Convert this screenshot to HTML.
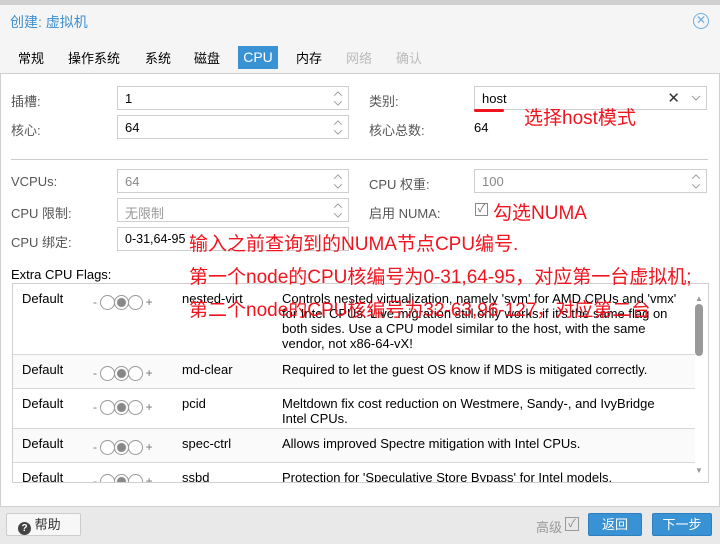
<!DOCTYPE html>
<html><head><meta charset="utf-8"><style>
*{box-sizing:border-box;margin:0;padding:0}
body{width:720px;height:544px;background:#f5f5f5;font-family:"Liberation Sans","Noto Sans CJK SC",sans-serif;font-size:13px;color:#000;position:relative;overflow:hidden}
.a{position:absolute;white-space:nowrap}
.lbl{color:#555}
.inp{position:absolute;height:24px;border:1px solid #cfcfcf;background:#fff;padding:4px 7px;font-size:13px}
.spin{position:absolute;right:5px;top:3px}
.red{color:#f0141e;font-size:19px}
.row{position:absolute;left:0;width:682px;border-bottom:1px solid #d8d8d8}
.row div{position:absolute;top:7px}
.tog{left:80px;color:#777;font-size:12px;top:11px!important}
.c{display:inline-block;width:15px;height:15px;border:1px solid #999;border-radius:50%;vertical-align:middle;margin:0 -0.5px;background:#fff}
.c.on{background:radial-gradient(circle,#888 4px,#fff 5px)}
.btn{position:absolute;height:23px;background:#3892d4;color:#fff;border:1px solid #2f7fc0;border-radius:2px;text-align:center;line-height:21px;font-size:13px}
</style></head><body>
<div class="a" style="left:0;top:0;width:720px;height:5px;background:#aaa;opacity:.5"></div>
<div class="a" style="left:10px;top:12px;color:#3d8fd0;font-size:14px">创建: 虚拟机</div>
<div class="a" style="left:693px;top:13px;width:16px;height:16px;border:1.5px solid #6aaee0;border-radius:50%;color:#6aaee0;font-size:12px;line-height:13px;text-align:center">✕</div>
<div class="a" style="left:18px;top:48px">常规</div>
<div class="a" style="left:68px;top:48px">操作系统</div>
<div class="a" style="left:145px;top:48px">系统</div>
<div class="a" style="left:194px;top:48px">磁盘</div>
<div class="a" style="left:238px;top:46px;width:40px;height:23px;background:#3892d4;color:#fff;text-align:center;line-height:22px;font-size:14px">CPU</div>
<div class="a" style="left:296px;top:48px">内存</div>
<div class="a" style="left:346px;top:48px;color:#bbb">网络</div>
<div class="a" style="left:396px;top:48px;color:#bbb">确认</div>
<div class="a" style="left:0;top:73px;width:720px;height:434px;background:#fff;border:1px solid #cfcfcf"></div>

<svg width="0" height="0" style="position:absolute"><defs><symbol id="sp" viewBox="0 0 10 18"><path d="M1 6 L5 2 L9 6 M1 12 L5 16 L9 12" fill="none" stroke="#999" stroke-width="1"/></symbol></defs></svg>

<div class="a lbl" style="left:11px;top:91px">插槽:</div>
<div class="inp" style="left:117px;top:86px;width:232px">1<svg class="spin" width="10" height="17"><use href="#sp"/></svg></div>
<div class="a lbl" style="left:11px;top:120px">核心:</div>
<div class="inp" style="left:117px;top:115px;width:232px">64<svg class="spin" width="10" height="17"><use href="#sp"/></svg></div>
<div class="a lbl" style="left:369px;top:91px">类别:</div>
<div class="inp" style="left:474px;top:86px;width:233px">host<span style="position:absolute;right:26px;top:2px;font-size:15px;color:#333">✕</span><svg style="position:absolute;right:5px;top:8px" width="10" height="6"><path d="M1 1 L5 5 L9 1" fill="none" stroke="#999"/></svg></div>
<div class="a" style="left:474px;top:109px;width:30px;height:3px;background:#f0141e;border-radius:2px"></div>
<div class="a red" style="left:524px;top:103px">选择host模式</div>
<div class="a lbl" style="left:369px;top:120px">核心总数:</div>
<div class="a" style="left:474px;top:120px">64</div>
<div class="a" style="left:11px;top:159px;width:697px;height:1px;background:#ccc"></div>

<div class="a lbl" style="left:11px;top:174px">VCPUs:</div>
<div class="inp" style="left:117px;top:169px;width:232px;color:#888">64<svg class="spin" width="10" height="17"><use href="#sp"/></svg></div>
<div class="a lbl" style="left:11px;top:203px">CPU 限制:</div>
<div class="inp" style="left:117px;top:198px;width:232px;color:#999">无限制<svg class="spin" width="10" height="17"><use href="#sp"/></svg></div>
<div class="a lbl" style="left:11px;top:232px">CPU 绑定:</div>
<div class="inp" style="left:117px;top:227px;width:232px;font-size:12.5px">0-31,64-95</div>
<div class="a lbl" style="left:369px;top:174px">CPU 权重:</div>
<div class="inp" style="left:474px;top:169px;width:233px;color:#888">100<svg class="spin" width="10" height="17"><use href="#sp"/></svg></div>
<div class="a lbl" style="left:369px;top:203px">启用 NUMA:</div>
<div class="a" style="left:475px;top:203px;width:13px;height:13px;border:1px solid #888;color:#666;font-size:11px;line-height:11px;text-align:center">✓</div>
<div class="a red" style="left:493px;top:198px">勾选NUMA</div>
<div class="a red" style="left:189px;top:229px">输入之前查询到的NUMA节点CPU编号.</div>
<div class="a" style="left:11px;top:267px">Extra CPU Flags:</div>

<div class="a" style="left:12px;top:283px;width:697px;height:200px;border:1px solid #cfcfcf;overflow:hidden;background:#fff">
<div class="row" style="top:0;height:71px;background:#fff"><div style="left:9px">Default</div><div class="tog">- <span class="c"></span><span class="c on"></span><span class="c"></span> +</div><div style="left:169px">nested-virt</div><div style="left:269px;white-space:normal;width:400px;line-height:15px">Controls nested virtualization, namely 'svm' for AMD CPUs and 'vmx' for Intel CPUs. Live migration still only works if it's the same flag on both sides. Use a CPU model similar to the host, with the same vendor, not x86-64-vX!</div></div>
<div class="row" style="top:71px;height:34px;background:#fafafa"><div style="left:9px">Default</div><div class="tog">- <span class="c"></span><span class="c on"></span><span class="c"></span> +</div><div style="left:169px">md-clear</div><div style="left:269px">Required to let the guest OS know if MDS is mitigated correctly.</div></div>
<div class="row" style="top:105px;height:40px"><div style="left:9px">Default</div><div class="tog">- <span class="c"></span><span class="c on"></span><span class="c"></span> +</div><div style="left:169px">pcid</div><div style="left:269px;line-height:15px">Meltdown fix cost reduction on Westmere, Sandy-, and IvyBridge<br>Intel CPUs.</div></div>
<div class="row" style="top:145px;height:34px;background:#fafafa"><div style="left:9px">Default</div><div class="tog">- <span class="c"></span><span class="c on"></span><span class="c"></span> +</div><div style="left:169px">spec-ctrl</div><div style="left:269px">Allows improved Spectre mitigation with Intel CPUs.</div></div>
<div class="row" style="top:179px;height:34px"><div style="left:9px">Default</div><div class="tog">- <span class="c"></span><span class="c on"></span><span class="c"></span> +</div><div style="left:169px">ssbd</div><div style="left:269px">Protection for 'Speculative Store Bypass' for Intel models.</div></div>
<div class="a" style="left:682px;top:10px;font-size:8px;color:#999">▲</div>
<div class="a" style="left:682px;top:20px;width:8px;height:52px;background:#999;border-radius:4px"></div>
<div class="a" style="left:682px;top:182px;font-size:8px;color:#999">▼</div>
</div>
<div class="a red" style="left:189px;top:262px">第一个node的CPU核编号为0-31,64-95，对应第一台虚拟机;</div>
<div class="a red" style="left:189px;top:295px">第二个node的CPU核编号为32-63,96-127，对应第二台</div>

<div class="a" style="left:0;top:507px;width:720px;height:37px;background:#e9e9e9"></div>
<div class="a" style="left:6px;top:513px;width:75px;height:23px;border:1px solid #ccc;border-radius:2px;background:#f7f7f7;line-height:21px;padding-left:11px;color:#333"><span style="display:inline-block;width:13px;height:13px;border-radius:50%;background:#444;color:#fff;font-size:10px;line-height:13px;text-align:center;font-weight:bold;vertical-align:-2px">?</span> 帮助</div>
<div class="a" style="left:536px;top:517px;color:#999">高级</div>
<div class="a" style="left:565px;top:517px;width:14px;height:14px;border:1px solid #999;color:#888;font-size:11px;line-height:12px;text-align:center">✓</div>
<div class="btn" style="left:588px;top:513px;width:54px">返回</div>
<div class="btn" style="left:652px;top:513px;width:60px">下一步</div>
</body></html>
